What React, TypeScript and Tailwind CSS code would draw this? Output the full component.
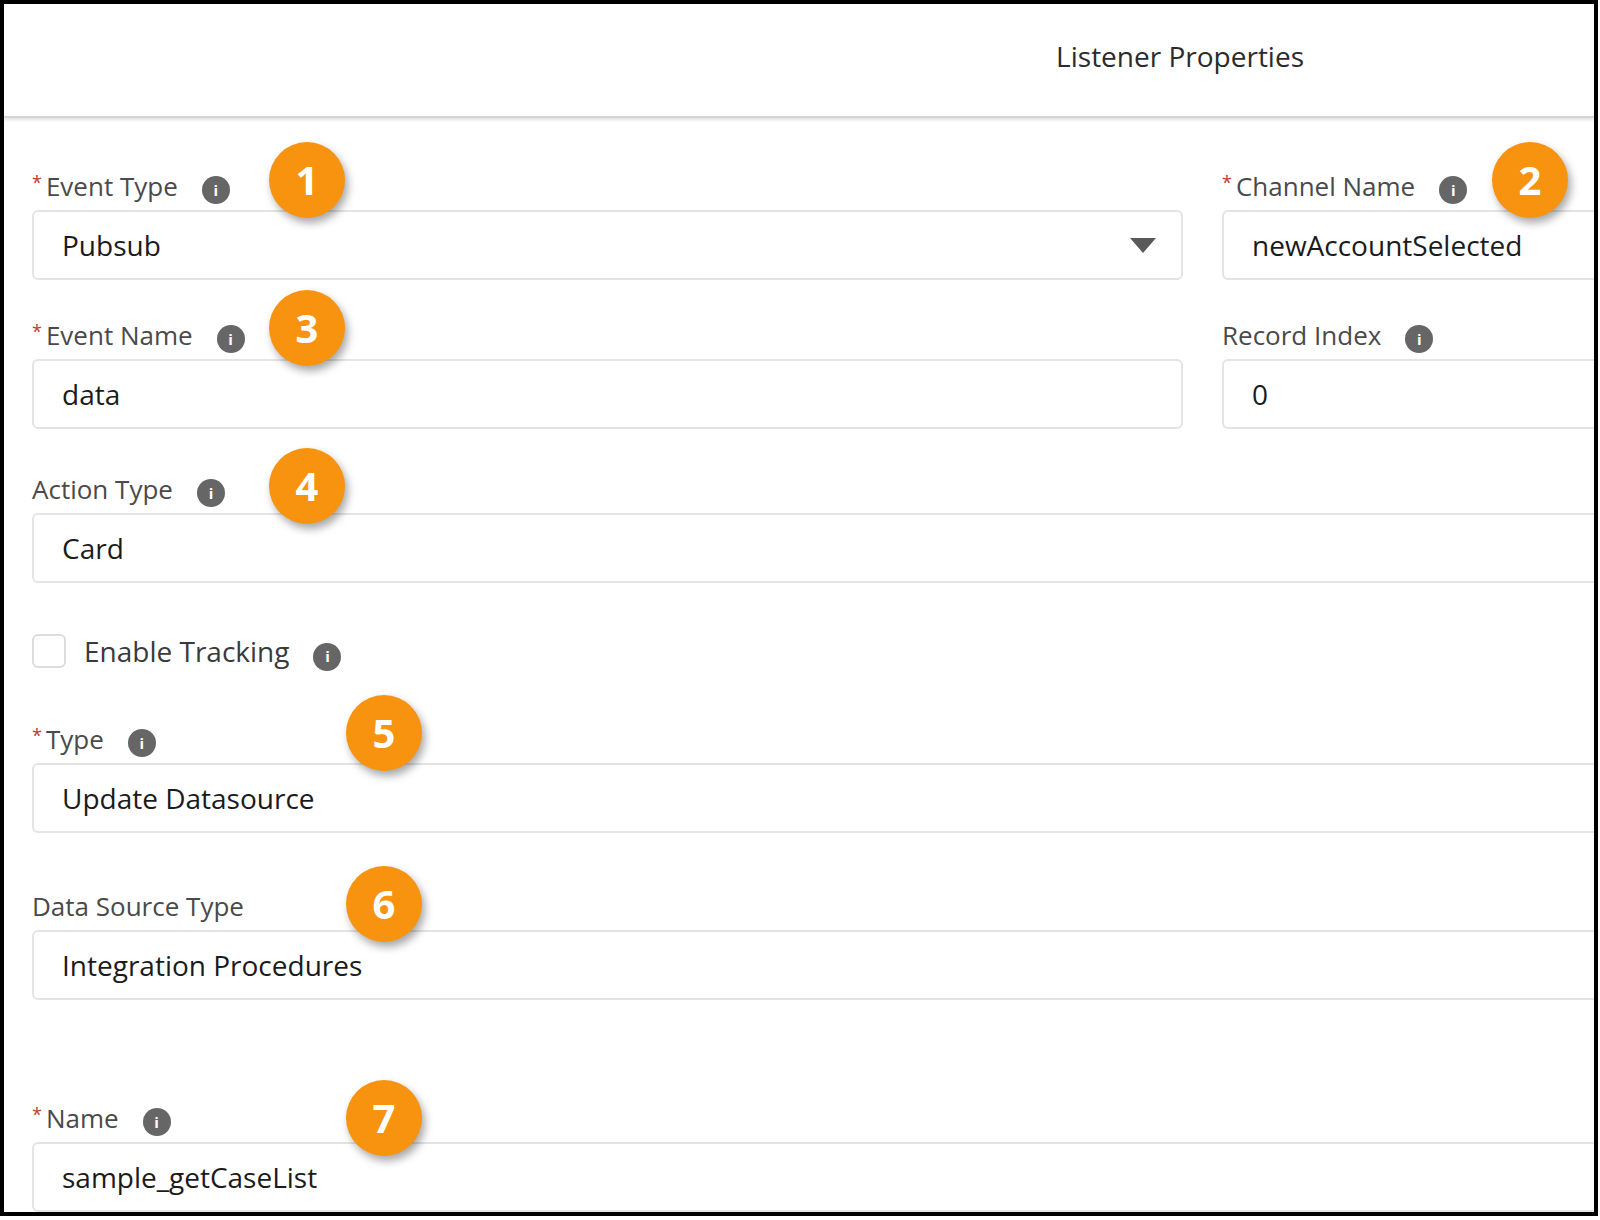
const font = { fontFamily: '"Open Sans", "Noto Sans", sans-serif' }

function Info() {
    return (
        <span className="inline-flex w-[28px] h-[28px] rounded-full bg-[#666666] items-center justify-center text-white text-[15px] font-bold leading-none">i</span>
    )
}

function Label({ text, req, gap = "ml-6" }: { text: string; req?: boolean; gap?: string }) {
    return (
        <div className="flex items-center h-[40px] text-[26px] text-[#4a4a4a]">
            {req && <span className="text-[#c23934] text-[18px] mr-1 -mt-2">*</span>}
            <span>{text}</span>
            <span className={gap}><Info /></span>
        </div>
    )
}

function Field({ value, select }: { value: string; select?: boolean }) {
    return (
        <div className="h-[70px] mt-[4px] rounded-md border-2 border-[#e4e4e4] flex items-center pl-[28px] pr-[24px] text-[28px] text-[#1b1b1b] bg-white">
            <span className="flex-1">{value}</span>
            {select && (
                <svg width="28" height="18" viewBox="0 0 28 18"><path d="M1 2h26L14 17z" fill="#5a5a5a" /></svg>
            )}
        </div>
    )
}

function Badge({ n, x, y }: { n: number; x: number; y: number }) {
    return (
        <div
            className="absolute w-[76px] h-[76px] rounded-full bg-[#f7930e] text-white text-[40px] font-bold flex items-center justify-center shadow-[3px_5px_8px_rgba(0,0,0,0.35)]"
            style={{ left: x - 38, top: y - 38 }}
        >
            {n}
        </div>
    )
}

export default function App() {
    return (
        <div className="w-[1600px] h-[1220px] bg-white" style={font}>
            <div className="relative w-[1598px] h-[1216px] border-4 border-black overflow-hidden bg-white">
                <div className="h-[114px] border-b-2 border-[#d4d4d4] shadow-[0_2px_3px_rgba(0,0,0,0.12)] flex items-center justify-end pr-[290px] pb-2 text-[28px] text-[#2b2b2b]">
                    Listener Properties
                </div>
                <div className="pl-[28px] w-[2000px]">
                    <div className="grid grid-cols-[1151px_600px] gap-x-[39px] pt-[48px]">
                        <div>
                            <Label text="Event Type" req />
                            <Field value="Pubsub" select />
                        </div>
                        <div>
                            <Label text="Channel Name" req />
                            <Field value="newAccountSelected" />
                        </div>
                        <div className="mt-[35px]">
                            <Label text="Event Name" req />
                            <Field value="data" />
                        </div>
                        <div className="mt-[35px]">
                            <Label text="Record Index" />
                            <Field value="0" />
                        </div>
                    </div>
                    <div className="w-[1800px]">
                        <div className="mt-[40px]">
                            <Label text="Action Type" />
                            <Field value="Card" />
                        </div>
                        <div className="mt-[50px] flex items-center h-[36px] text-[28px] text-[#3a3a3a]">
                            <span className="w-[34px] h-[34px] rounded-md border-2 border-[#dcdcdc]" />
                            <span className="ml-[18px]">Enable Tracking</span>
                            <span className="ml-6"><Info /></span>
                        </div>
                        <div className="mt-[50px]">
                            <Label text="Type" req />
                            <Field value="Update Datasource" />
                        </div>
                        <div className="mt-[53px]">
                            <Label text="Data Source Type" gap="hidden" />
                            <Field value="Integration Procedures" />
                        </div>
                        <div className="mt-[98px]">
                            <Label text="Name" req />
                            <Field value="sample_getCaseList" />
                        </div>
                    </div>
                </div>
                <Badge n={1} x={303} y={176} />
                <Badge n={2} x={1526} y={176} />
                <Badge n={3} x={303} y={324} />
                <Badge n={4} x={303} y={482} />
                <Badge n={5} x={380} y={729} />
                <Badge n={6} x={380} y={900} />
                <Badge n={7} x={380} y={1114} />
            </div>
        </div>
    )
}
